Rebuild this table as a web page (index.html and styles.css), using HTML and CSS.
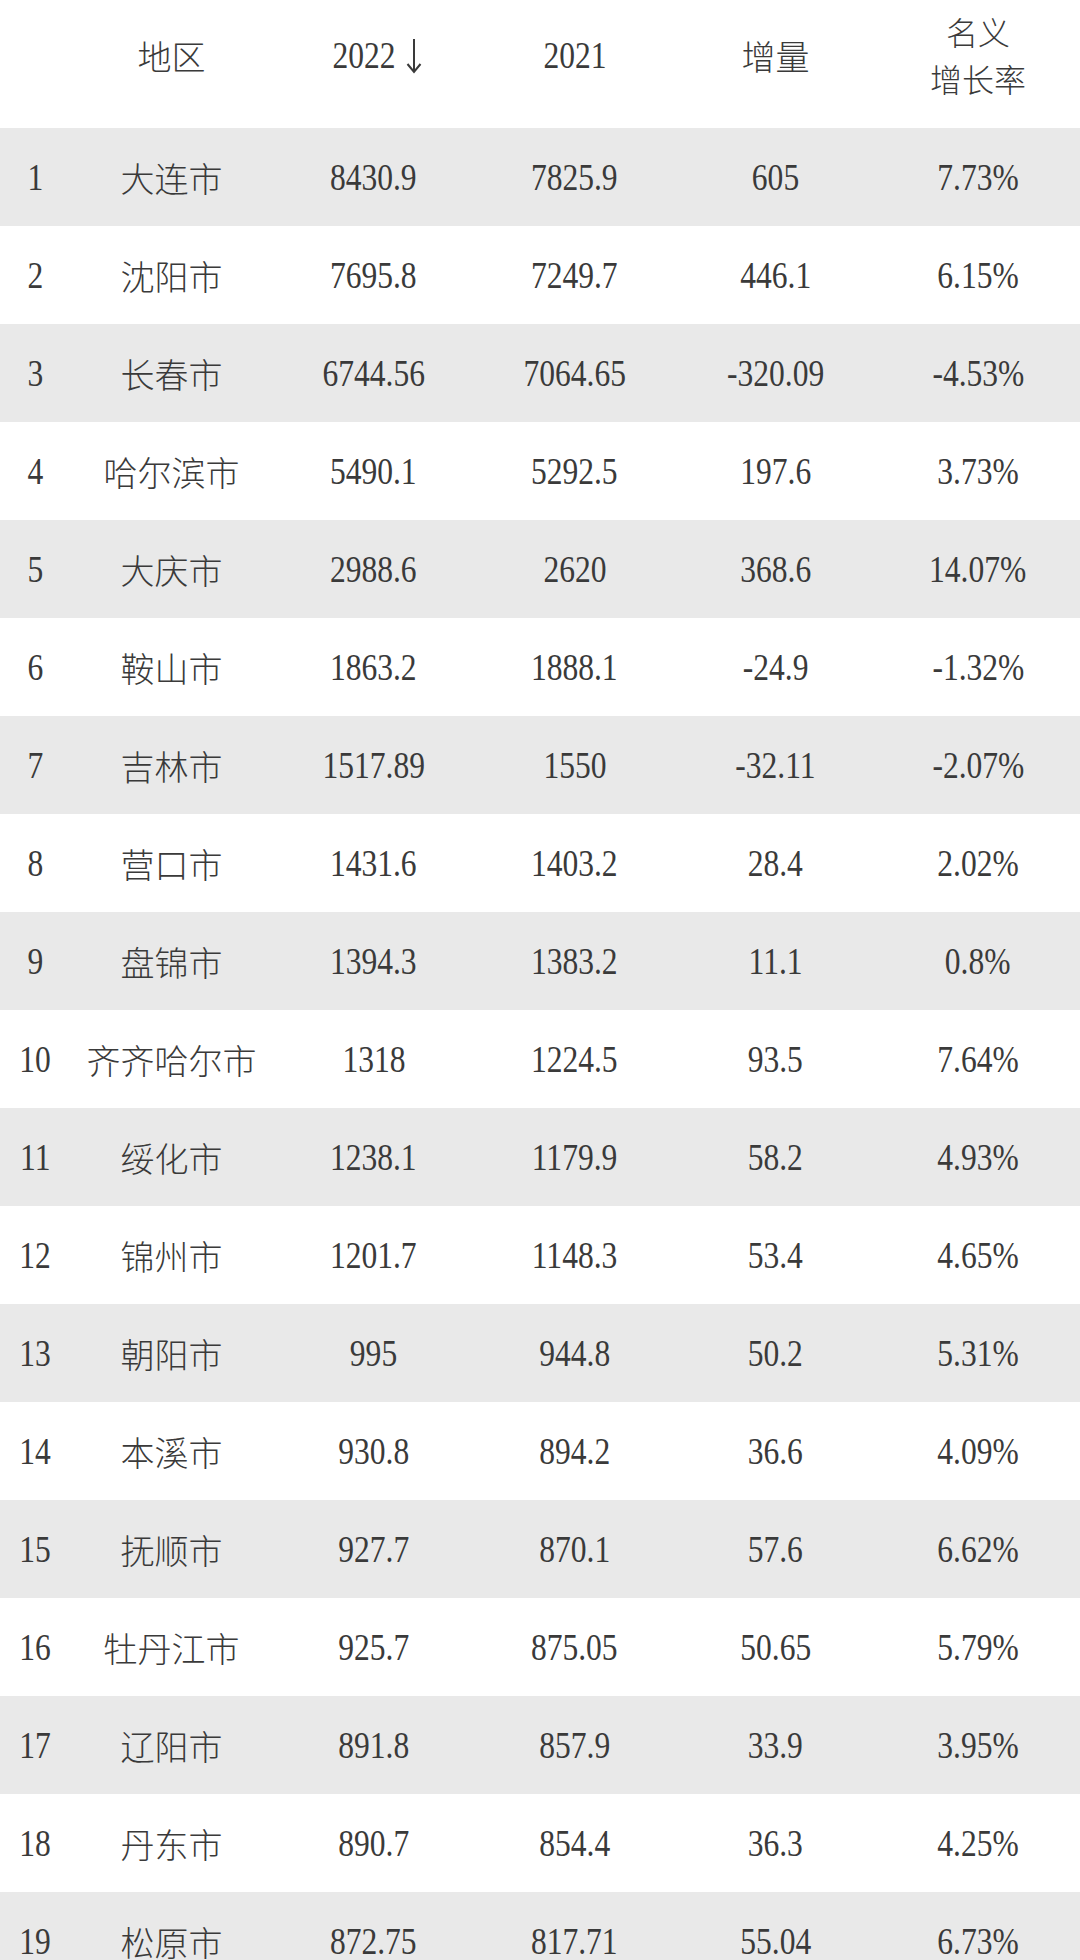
FILE: index.html
```html
<!DOCTYPE html>
<html lang="zh-CN">
<head>
<meta charset="utf-8">
<title>城市GDP</title>
<link rel="stylesheet" href="styles.css">
</head>
<body>
<div class="table">
  <div class="row head">
    <div class="cell"></div>
    <div class="cell zh">地区</div>
    <div class="cell"><span class="num">2022</span><svg class="arrow" viewBox="0 0 16 36" width="16" height="36"><path d="M8 1 V34 M1.5 26 L8 34 L14.5 26" fill="none" stroke="#3a3a3a" stroke-width="2"/></svg></div>
    <div class="cell"><span class="num">2021</span></div>
    <div class="cell zh">增量</div>
    <div class="cell zh two"><span class="line">名义</span><span class="line">增长率</span></div>
  </div>
  <div id="rows"></div>
</div>
<script src="app.js"></script>
</body>
</html>
```

FILE: app.js
```js
const data = [
  ["1","大连市","8430.9","7825.9","605","7.73%"],
  ["2","沈阳市","7695.8","7249.7","446.1","6.15%"],
  ["3","长春市","6744.56","7064.65","-320.09","-4.53%"],
  ["4","哈尔滨市","5490.1","5292.5","197.6","3.73%"],
  ["5","大庆市","2988.6","2620","368.6","14.07%"],
  ["6","鞍山市","1863.2","1888.1","-24.9","-1.32%"],
  ["7","吉林市","1517.89","1550","-32.11","-2.07%"],
  ["8","营口市","1431.6","1403.2","28.4","2.02%"],
  ["9","盘锦市","1394.3","1383.2","11.1","0.8%"],
  ["10","齐齐哈尔市","1318","1224.5","93.5","7.64%"],
  ["11","绥化市","1238.1","1179.9","58.2","4.93%"],
  ["12","锦州市","1201.7","1148.3","53.4","4.65%"],
  ["13","朝阳市","995","944.8","50.2","5.31%"],
  ["14","本溪市","930.8","894.2","36.6","4.09%"],
  ["15","抚顺市","927.7","870.1","57.6","6.62%"],
  ["16","牡丹江市","925.7","875.05","50.65","5.79%"],
  ["17","辽阳市","891.8","857.9","33.9","3.95%"],
  ["18","丹东市","890.7","854.4","36.3","4.25%"],
  ["19","松原市","872.75","817.71","55.04","6.73%"]
];
const host = document.getElementById("rows");
data.forEach((r, i) => {
  const row = document.createElement("div");
  row.className = "row" + (i % 2 === 0 ? " stripe" : "");
  r.forEach((v, j) => {
    const c = document.createElement("div");
    if (j === 1) {
      c.className = "cell zh";
      c.textContent = v;
    } else {
      c.className = "cell";
      const s = document.createElement("span");
      s.className = "num";
      s.textContent = v;
      c.appendChild(s);
    }
    row.appendChild(c);
  });
  host.appendChild(row);
});
```

FILE: styles.css
```css
html, body {
  margin: 0;
  padding: 0;
  background: #ffffff;
  height: 1960px;
  overflow: hidden;
}
body {
  color: #3a3a3a;
  font-family: "Liberation Serif", "Noto Sans CJK SC", serif;
}
.table {
  width: 1080px;
}
.row {
  display: grid;
  grid-template-columns: 70px 203px 201px 201px 201px 204px;
  height: 98px;
}
.row.stripe {
  background: #e9e9e9;
}
.row.head {
  height: 128px;
  padding-bottom: 18px;
  box-sizing: border-box;
}
.cell {
  display: flex;
  align-items: center;
  justify-content: center;
  white-space: nowrap;
}
.zh {
  font-family: "Noto Sans CJK SC", sans-serif;
  font-size: 34px;
  font-weight: 300;
  color: #3a3a3a;
}
.two {
  flex-direction: column;
}
.line {
  display: block;
  font-size: 32px;
  line-height: 47px;
}
.num {
  display: inline-block;
  font-family: "Liberation Serif", serif;
  font-size: 38px;
  line-height: 1;
  transform: scaleX(0.83);
}
.arrow {
  margin-left: 4px;
  margin-top: 2px;
}
```
